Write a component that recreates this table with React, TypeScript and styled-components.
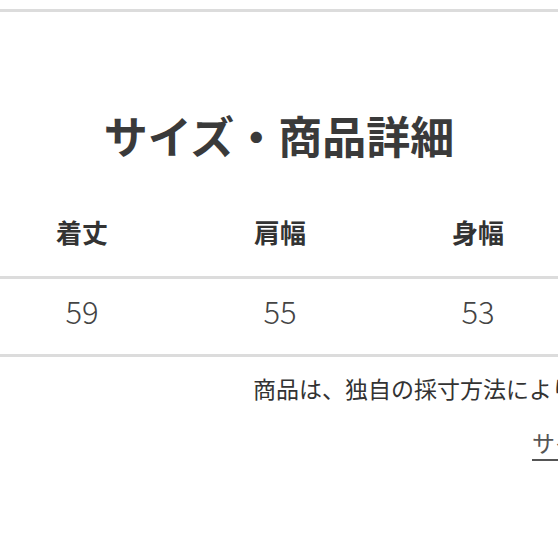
import React from "react";
import styled, { createGlobalStyle } from "styled-components";

const GlobalStyle = createGlobalStyle`
  html, body {
    margin: 0;
    padding: 0;
    background: #fff;
  }
  body {
    font-family: "Noto Sans CJK JP", "Noto Sans", sans-serif;
    color: #333;
  }
`;

const columns = [
  { label: "着丈", value: "59" },
  { label: "肩幅", value: "55" },
  { label: "身幅", value: "53" },
  { label: "袖丈", value: "22" },
];

export default function App() {
  return (
    <>
      <GlobalStyle />
      <Page>
        <TopRule />
        <Title>サイズ・商品詳細</Title>
        <SizeTable>
          <HeadRow>
            {columns.map((c) => (
              <HeadCell key={c.label}>{c.label}</HeadCell>
            ))}
          </HeadRow>
          <BodyRow>
            {columns.map((c) => (
              <ValueCell key={c.label}>{c.value}</ValueCell>
            ))}
          </BodyRow>
        </SizeTable>
        <Note>商品は、独自の採寸方法により採寸しております。</Note>
        <LinkRow>
          <SizeLink href="#">サイズの測り方</SizeLink>
        </LinkRow>
      </Page>
    </>
  );
}

const Page = styled.div`
  width: 558px;
  height: 558px;
  overflow: hidden;
  background: #fff;
`;

const TopRule = styled.div`
  margin-top: 9px;
  height: 3px;
  background: #dcdcdc;
`;

const Title = styled.h2`
  margin: 101px 0 0;
  font-size: 44px;
  line-height: 1;
  font-weight: 700;
  color: #3a3a3a;
  text-align: center;
  white-space: nowrap;
`;

const SizeTable = styled.div`
  margin-top: 62px;
`;

const Row = styled.div`
  display: grid;
  grid-template-columns: repeat(4, 198px);
  margin-left: -17px;
  width: 809px;
  border-bottom: 3px solid #dcdcdc;
`;

const HeadRow = styled(Row)`
  padding-bottom: 31px;
`;

const BodyRow = styled(Row)`
  padding: 16px 0 28px;
`;

const HeadCell = styled.div`
  font-size: 26px;
  line-height: 1;
  font-weight: 700;
  color: #333;
  text-align: center;
`;

const ValueCell = styled.div`
  font-size: 31px;
  line-height: 1;
  font-weight: 300;
  color: #444;
  text-align: center;
`;

const Note = styled.p`
  margin: 20px 0 0 253px;
  font-size: 23px;
  line-height: 1;
  color: #333;
  white-space: nowrap;
`;

const LinkRow = styled.div`
  margin: 31px 0 0 532px;
  white-space: nowrap;
`;

const SizeLink = styled.a`
  font-size: 23px;
  line-height: 1;
  color: #555;
  text-decoration: underline;
  text-underline-offset: 7px;
`;
